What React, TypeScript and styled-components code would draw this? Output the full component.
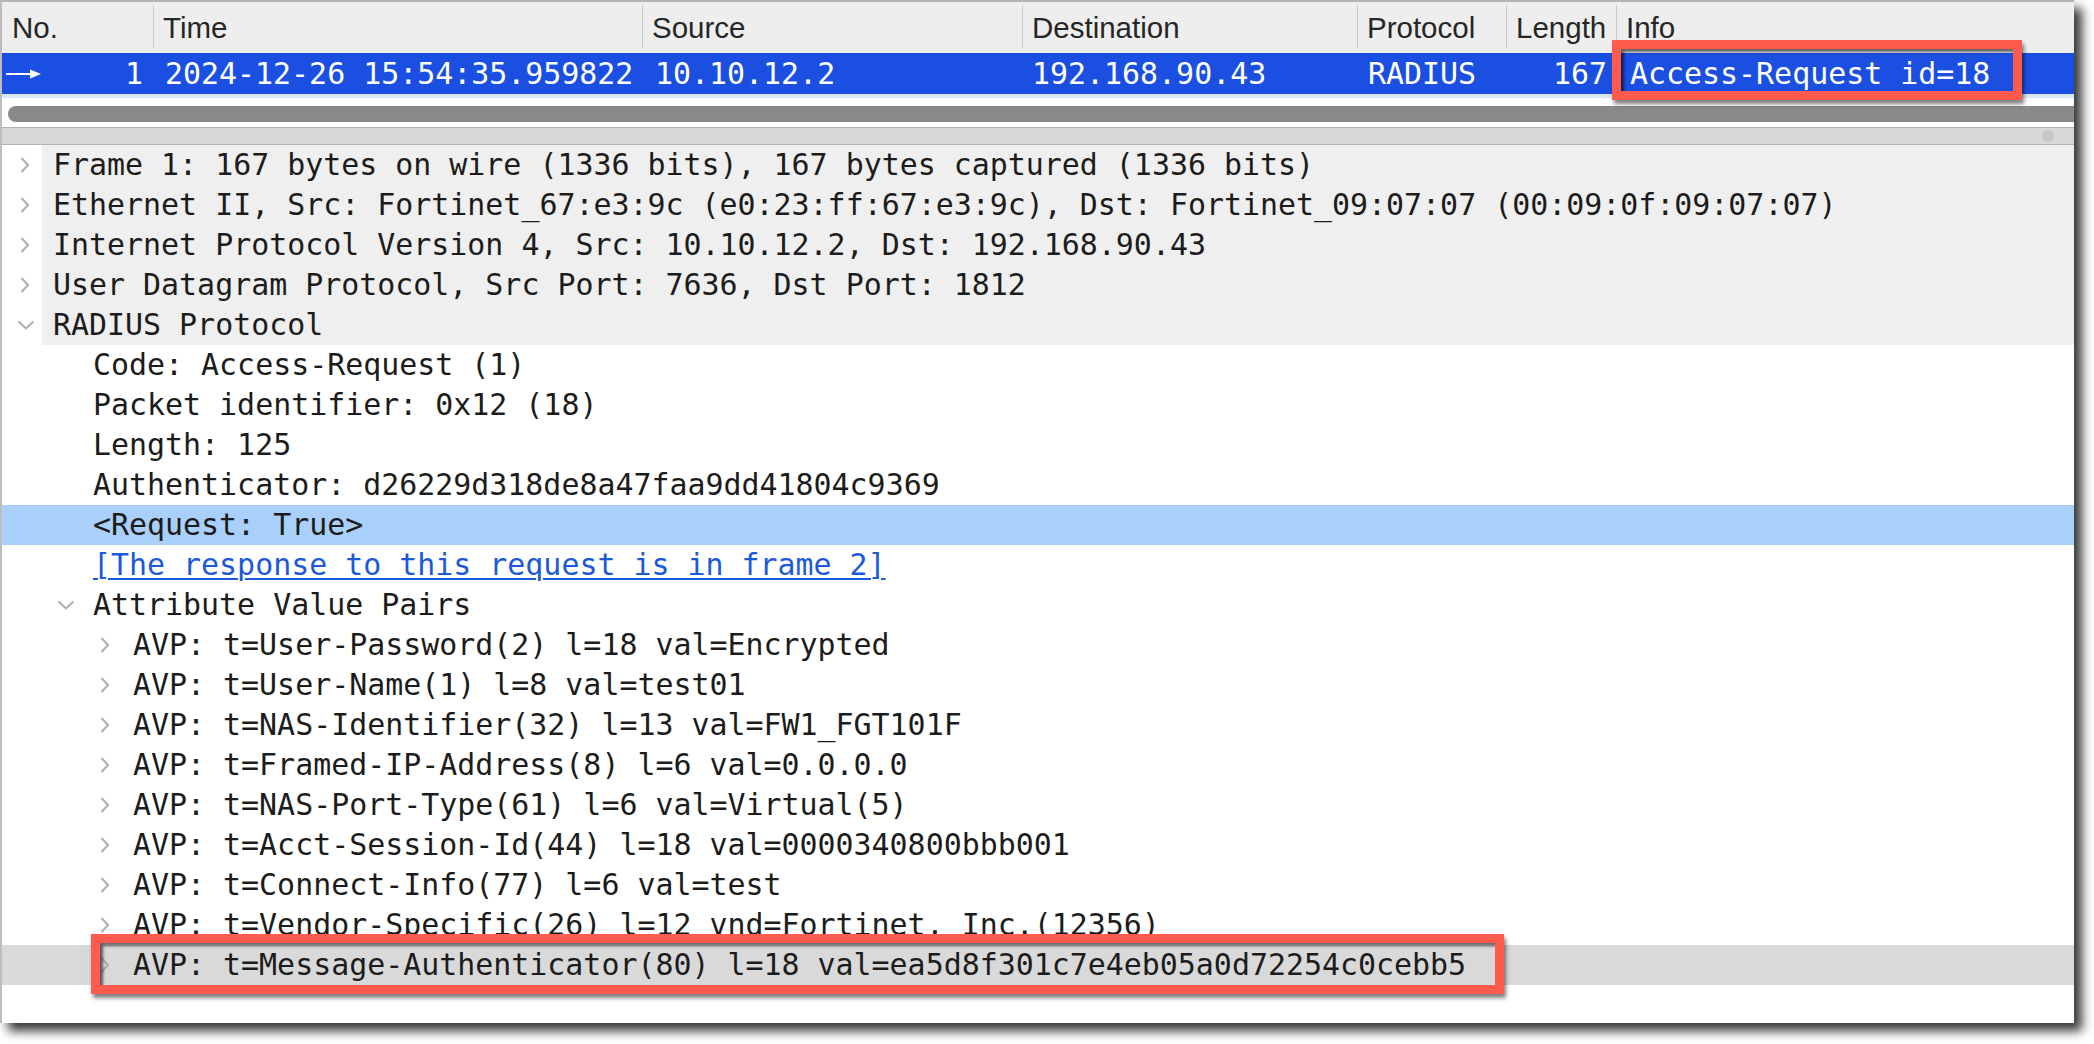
import React from "react";
import styled, { createGlobalStyle, css } from "styled-components";

const MONO = `"DejaVu Sans Mono", "Liberation Mono", monospace`;
const SANS = `"Liberation Sans", Arial, sans-serif`;
const COLS = "151px 489px 380px 335px 149px 110px 1fr";
const MONO_SIZE = "29.93px";

const GlobalStyle = createGlobalStyle`
  html, body { margin: 0; padding: 0; background: #ffffff; }
  body { width: 2094px; height: 1044px; overflow: hidden; }
`;

const Window = styled.div`
  position: relative;
  box-sizing: border-box;
  width: 2074px;
  height: 1023px;
  border-top: 2px solid #b4b4b4;
  border-left: 2px solid #bdbdbd;
  background: #ffffff;
  box-shadow: 8px 8px 10px rgba(0, 0, 0, 0.78);
  display: flex;
  flex-direction: column;
`;

const HeaderRow = styled.div`
  display: grid;
  grid-template-columns: ${COLS};
  height: 51px;
  background: #eeeeee;
  font-family: ${SANS};
  font-size: 29.5px;
  color: #262626;
`;

const HeaderCell = styled.div<{ $sep?: boolean }>`
  position: relative;
  padding-left: 10px;
  line-height: 51px;
  white-space: nowrap;
  overflow: hidden;
  ${(p) =>
    p.$sep &&
    css`
      &::before {
        content: "";
        position: absolute;
        left: -1px;
        top: 3px;
        bottom: 5px;
        width: 2px;
        background: #c9c9c9;
      }
    `}
`;

const PacketRow = styled.div`
  display: grid;
  grid-template-columns: ${COLS};
  height: 41px;
  background: #1b4fe2;
  color: #ffffff;
  font-family: ${MONO};
  font-size: ${MONO_SIZE};
  line-height: 41px;
`;

const Cell = styled.div<{ $right?: boolean; $pad: number }>`
  position: relative;
  white-space: nowrap;
  text-align: ${(p) => (p.$right ? "right" : "left")};
  ${(p) => (p.$right ? `padding-right: ${p.$pad}px;` : `padding-left: ${p.$pad}px;`)}
`;

const NoCell = styled.div`
  display: flex;
  align-items: center;
  justify-content: space-between;
  padding: 0 10px 0 4px;
`;

const Strip = styled.div`
  height: 4px;
  background: #d9e7f7;
`;

const ScrollArea = styled.div`
  box-sizing: border-box;
  height: 29px;
  padding: 8px 0 0 6px;
  background: #ffffff;
`;

const Thumb = styled.div`
  height: 16px;
  border-radius: 8px 0 0 8px;
  background: #898989;
`;

const Splitter = styled.div`
  box-sizing: border-box;
  height: 18px;
  border-top: 1px solid #b3b3b3;
  border-bottom: 1px solid #b3b3b3;
  background: #d7d7d7;
  display: flex;
  align-items: center;
  justify-content: flex-end;
  padding-right: 20px;
`;

const Handle = styled.div`
  width: 12px;
  height: 12px;
  border-radius: 50%;
  background: #c6c6c6;
`;

const Tree = styled.div`
  flex: 1;
  display: flex;
  flex-direction: column;
  background: #ffffff;
`;

type Tone = "plain" | "top" | "selected" | "focus";

const toneBg: Record<Tone, string> = {
  plain: "transparent",
  top: "linear-gradient(to right, #ffffff 40px, #efefef 40px)",
  selected: "#a8d0fa",
  focus: "#d9d9d9",
};

const TreeRow = styled.div<{ $level: number; $tone: Tone }>`
  position: relative;
  display: flex;
  align-items: center;
  height: 40px;
  padding-left: ${(p) => 11 + p.$level * 40}px;
  background: ${(p) => toneBg[p.$tone]};
  font-family: ${MONO};
  font-size: ${MONO_SIZE};
  line-height: 40px;
  color: #1c1c1c;
  white-space: nowrap;
`;

const ToggleSlot = styled.span`
  box-sizing: border-box;
  flex: 0 0 40px;
  width: 40px;
  height: 40px;
  display: flex;
  align-items: center;
  padding-left: 4px;
`;

const Link = styled.span`
  color: #1c5ad9;
  text-decoration: underline;
  text-decoration-thickness: 2px;
  text-underline-offset: 3px;
`;

const Callout = styled.div<{ $l: number; $t: number; $w: number; $h: number }>`
  position: absolute;
  z-index: 3;
  box-sizing: border-box;
  left: ${(p) => p.$l}px;
  top: ${(p) => p.$t}px;
  width: ${(p) => p.$w}px;
  height: ${(p) => p.$h}px;
  border: 9px solid #ff5a4e;
  pointer-events: none;
  box-shadow: 2px 4px 4px rgba(0, 0, 0, 0.5), inset 3px 3px 3px rgba(0, 0, 0, 0.6);
`;

const Chevron: React.FC<{ open?: boolean }> = ({ open }) =>
  open ? (
    <svg width="18" height="10" viewBox="0 0 18 10">
      <polyline points="1.5,1.5 9,8.5 16.5,1.5" fill="none" stroke="#adadad" strokeWidth="2" />
    </svg>
  ) : (
    <svg width="18" height="16" viewBox="0 0 18 16">
      <polyline points="4.5,1 11,8 4.5,15" fill="none" stroke="#adadad" strokeWidth="2" />
    </svg>
  );

const Arrow = () => (
  <svg width="36" height="12" viewBox="0 0 36 12">
    <line x1="0" y1="6" x2="26" y2="6" stroke="#ffffff" strokeWidth="2" />
    <polygon points="24,1.5 35,6 24,10.5" fill="#ffffff" />
  </svg>
);

type Node = {
  level: number;
  tone?: Tone;
  toggle?: "open" | "closed";
  text: string;
  link?: boolean;
  callout?: boolean;
};

const nodes: Node[] = [
  { level: 0, tone: "top", toggle: "closed", text: "Frame 1: 167 bytes on wire (1336 bits), 167 bytes captured (1336 bits)" },
  { level: 0, tone: "top", toggle: "closed", text: "Ethernet II, Src: Fortinet_67:e3:9c (e0:23:ff:67:e3:9c), Dst: Fortinet_09:07:07 (00:09:0f:09:07:07)" },
  { level: 0, tone: "top", toggle: "closed", text: "Internet Protocol Version 4, Src: 10.10.12.2, Dst: 192.168.90.43" },
  { level: 0, tone: "top", toggle: "closed", text: "User Datagram Protocol, Src Port: 7636, Dst Port: 1812" },
  { level: 0, tone: "top", toggle: "open", text: "RADIUS Protocol" },
  { level: 1, text: "Code: Access-Request (1)" },
  { level: 1, text: "Packet identifier: 0x12 (18)" },
  { level: 1, text: "Length: 125" },
  { level: 1, text: "Authenticator: d26229d318de8a47faa9dd41804c9369" },
  { level: 1, tone: "selected", text: "<Request: True>" },
  { level: 1, link: true, text: "[The response to this request is in frame 2]" },
  { level: 1, toggle: "open", text: "Attribute Value Pairs" },
  { level: 2, toggle: "closed", text: "AVP: t=User-Password(2) l=18 val=Encrypted" },
  { level: 2, toggle: "closed", text: "AVP: t=User-Name(1) l=8 val=test01" },
  { level: 2, toggle: "closed", text: "AVP: t=NAS-Identifier(32) l=13 val=FW1_FGT101F" },
  { level: 2, toggle: "closed", text: "AVP: t=Framed-IP-Address(8) l=6 val=0.0.0.0" },
  { level: 2, toggle: "closed", text: "AVP: t=NAS-Port-Type(61) l=6 val=Virtual(5)" },
  { level: 2, toggle: "closed", text: "AVP: t=Acct-Session-Id(44) l=18 val=0000340800bbb001" },
  { level: 2, toggle: "closed", text: "AVP: t=Connect-Info(77) l=6 val=test" },
  { level: 2, toggle: "closed", text: "AVP: t=Vendor-Specific(26) l=12 vnd=Fortinet, Inc.(12356)" },
  {
    level: 2,
    tone: "focus",
    toggle: "closed",
    callout: true,
    text: "AVP: t=Message-Authenticator(80) l=18 val=ea5d8f301c7e4eb05a0d72254c0cebb5",
  },
];

const headers = ["No.", "Time", "Source", "Destination", "Protocol", "Length", "Info"];

export default function App() {
  return (
    <>
      <GlobalStyle />
      <Window>
        <HeaderRow>
          {headers.map((h, i) => (
            <HeaderCell key={h} $sep={i > 0}>
              {h}
            </HeaderCell>
          ))}
        </HeaderRow>
        <PacketRow>
          <NoCell>
            <Arrow />
            <span>1</span>
          </NoCell>
          <Cell $pad={12}>2024-12-26 15:54:35.959822</Cell>
          <Cell $pad={13}>10.10.12.2</Cell>
          <Cell $pad={10}>192.168.90.43</Cell>
          <Cell $pad={11}>RADIUS</Cell>
          <Cell $right $pad={9}>
            167
          </Cell>
          <Cell $pad={14}>
            Access-Request id=18
            <Callout $l={-4} $t={-13} $w={410} $h={60} />
          </Cell>
        </PacketRow>
        <Strip />
        <ScrollArea>
          <Thumb />
        </ScrollArea>
        <Splitter>
          <Handle />
        </Splitter>
        <Tree>
          {nodes.map((n, i) => (
            <TreeRow key={i} $level={n.level} $tone={n.tone ?? "plain"}>
              <ToggleSlot>{n.toggle && <Chevron open={n.toggle === "open"} />}</ToggleSlot>
              {n.link ? <Link>{n.text}</Link> : <span>{n.text}</span>}
              {n.callout && <Callout $l={89} $t={-11} $w={1413} $h={60} />}
            </TreeRow>
          ))}
        </Tree>
      </Window>
    </>
  );
}
